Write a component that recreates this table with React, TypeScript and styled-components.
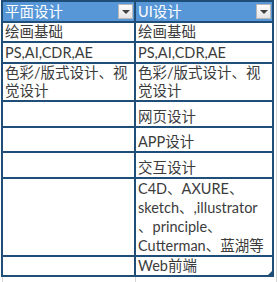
import React from "react";
import styled, { createGlobalStyle } from "styled-components";

const GlobalStyle = createGlobalStyle`
  html, body {
    margin: 0;
    padding: 0;
    background: #fff;
  }
`;

const Sheet = styled.div`
  position: relative;
  width: 277px;
  height: 282px;
  overflow: hidden;
  background-color: #fff;
  background-image: linear-gradient(#d4d4d4, #d4d4d4),
    linear-gradient(#d4d4d4, #d4d4d4), linear-gradient(#d4d4d4, #d4d4d4);
  background-size: 1px 100%;
  background-position: 2px 0, 135px 0, 276px 0;
  background-repeat: no-repeat;
`;

const Table = styled.div`
  position: relative;
  display: grid;
  grid-template-columns: 131px 136px;
  grid-template-rows: 19px 18px 19px 36px 24px 23px 24px 76px 18px;
  gap: 2px;
  padding: 2px;
  margin-left: 1px;
  width: max-content;
  background: #1f4e78;
`;

const HeaderCell = styled.div`
  display: flex;
  align-items: center;
  justify-content: space-between;
  padding: 0 1px 0 2px;
  background: #5797d8;
  color: #fff;
  font-family: "Lato", "Noto Sans CJK SC", sans-serif;
  font-size: 14.5px;
  line-height: 19px;
  white-space: nowrap;
`;

const FilterButton = styled.span`
  display: flex;
  align-items: center;
  justify-content: center;
  width: 15px;
  height: 15px;
  box-sizing: border-box;
  border: 1px solid #b8b8b8;
  background: linear-gradient(#fdfdfd, #e4e4e4);
  &::after {
    content: "";
    border-left: 4px solid transparent;
    border-right: 4px solid transparent;
    border-top: 4px solid #404040;
  }
`;

const Cell = styled.div<{ $lh?: number }>`
  position: relative;
  display: flex;
  flex-direction: column;
  justify-content: flex-end;
  padding: 0 2px;
  background: #fff;
  color: #3c3c3c;
  font-family: "Lato", "Noto Sans CJK SC", sans-serif;
  font-size: 14.5px;
  line-height: ${(p) => p.$lh ?? 18}px;
  white-space: nowrap;
`;

const Line = styled.div``;

const ResizeHandle = styled.span`
  position: absolute;
  right: 0;
  bottom: 0;
  width: 0;
  height: 0;
  border-left: 4px solid transparent;
  border-bottom: 4px solid #1f4e78;
`;

const rows: { a: string[]; b: string[]; lh?: number }[] = [
  { a: ["绘画基础"], b: ["绘画基础"] },
  { a: ["PS,AI,CDR,AE"], b: ["PS,AI,CDR,AE"] },
  {
    a: ["色彩/版式设计、视", "觉设计"],
    b: ["色彩/版式设计、视", "觉设计"],
  },
  { a: [], b: ["网页设计"], lh: 19 },
  { a: [], b: ["APP设计"], lh: 19 },
  { a: [], b: ["交互设计"], lh: 19 },
  {
    a: [],
    b: ["C4D、AXURE、", "sketch、,illustrator", "、principle、", "Cutterman、蓝湖等"],
    lh: 19,
  },
  { a: [], b: ["Web前端"] },
];

export default function App() {
  return (
    <>
      <GlobalStyle />
      <Sheet>
        <Table>
          <HeaderCell>
            平面设计
            <FilterButton />
          </HeaderCell>
          <HeaderCell>
            UI设计
            <FilterButton />
          </HeaderCell>
          {rows.map((r, i) => (
            <React.Fragment key={i}>
              <Cell $lh={r.lh}>
                {r.a.map((t) => (
                  <Line key={t}>{t}</Line>
                ))}
              </Cell>
              <Cell $lh={r.lh}>
                {r.b.map((t) => (
                  <Line key={t}>{t}</Line>
                ))}
                {i === rows.length - 1 && <ResizeHandle />}
              </Cell>
            </React.Fragment>
          ))}
        </Table>
      </Sheet>
    </>
  );
}
